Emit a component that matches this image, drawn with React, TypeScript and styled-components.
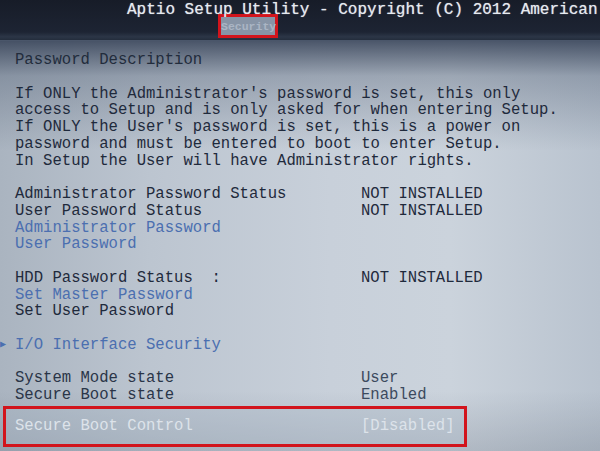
import styled, { createGlobalStyle } from 'styled-components';

const GlobalStyle = createGlobalStyle`
  html, body {
    margin: 0;
    padding: 0;
    background: #1b2130;
  }
`;

const Screen = styled.div`
  width: 600px;
  height: 451px;
  overflow: hidden;
  display: flex;
  flex-direction: column;
  font-family: 'Liberation Mono', 'DejaVu Sans Mono', monospace;
  font-size: 15.6px;
  white-space: pre;
`;

const TopBar = styled.div`
  height: 41px;
  flex-shrink: 0;
  padding-top: 2px;
  box-sizing: border-box;
  background: linear-gradient(180deg, #171c28 0%, #1d2433 80%, #2c3647 92%, #242d3c 100%);
  border-bottom: 1px solid #4a566a;
`;

const Title = styled.div`
  height: 12px;
  line-height: 17px;
  padding-left: 127px;
  font-size: 16px;
  color: #e6eaf0;
  text-shadow: 0 0 1px rgba(230, 234, 240, 0.7);
`;

const Tab = styled.div`
  margin-left: 218px;
  width: 60px;
  height: 24px;
  box-sizing: border-box;
  border: 3px solid #d2141c;
  background: #8794a6;
  color: #aab5c4;
  font-size: 11.5px;
  line-height: 19px;
  text-align: center;
  font-weight: bold;
`;

const Body = styled.div`
  flex: 1;
  padding-top: 11px;
  background:
    linear-gradient(180deg, rgba(44, 56, 78, 0.8) 0px, rgba(70, 84, 106, 0.35) 35px, rgba(0, 0, 0, 0) 110px),
    linear-gradient(0deg, rgba(60, 70, 86, 0.18) 0px, rgba(0, 0, 0, 0) 60px),
    linear-gradient(90deg, #aab4c0 0%, #bcc5d0 25%, #c8d0da 55%, #cbd3dc 75%, #b9c3cf 100%);
  color: #1f2a3c;
`;

const Line = styled.div<{ $tone?: 'link' | 'muted' }>`
  position: relative;
  height: 16.75px;
  line-height: 16.75px;
  padding-left: 15px;
  display: grid;
  grid-template-columns: 346px 1fr;
  color: ${(p) => (p.$tone === 'link' ? '#4b6fb0' : p.$tone === 'muted' ? '#2a3548' : '#1f2a3c')};
`;

const Heading = styled(Line)`
  color: #222c3c;
`;

const Pointer = styled.span`
  position: absolute;
  left: 0;
  top: 0;
  font-size: 10px;
  color: #4b6fb0;
`;

const Value = styled.span<{ $soft?: boolean }>`
  color: ${(p) => (p.$soft ? '#3c4a5e' : '#1f2a3c')};
`;

const Highlight = styled.div`
  margin: 2px 0 0 3px;
  width: 464px;
  height: 41px;
  box-sizing: border-box;
  border: 3px solid #d2141c;
  padding-left: 9px;
  display: grid;
  grid-template-columns: 346px 1fr;
  align-items: center;
  color: #dde3ea;
  background: rgba(176, 188, 202, 0.35);
`;

const descLines = [
  "If ONLY the Administrator's password is set, this only",
  'access to Setup and is only asked for when entering Setup.',
  "If ONLY the User's password is set, this is a power on",
  'password and must be entered to boot to enter Setup.',
  'In Setup the User will have Administrator rights.',
];

export default function App() {
  return (
    <Screen>
      <GlobalStyle />
      <TopBar>
        <Title>Aptio Setup Utility - Copyright (C) 2012 American</Title>
        <Tab>Security</Tab>
      </TopBar>
      <Body>
        <Heading>Password Description</Heading>
        <Line />
        {descLines.map((t) => (
          <Line key={t}>{t}</Line>
        ))}
        <Line />
        <Line>
          <span>Administrator Password Status</span>
          <Value>NOT INSTALLED</Value>
        </Line>
        <Line>
          <span>User Password Status</span>
          <Value>NOT INSTALLED</Value>
        </Line>
        <Line $tone="link">Administrator Password</Line>
        <Line $tone="link">User Password</Line>
        <Line />
        <Line>
          <span>HDD Password Status  :</span>
          <Value>NOT INSTALLED</Value>
        </Line>
        <Line $tone="link">Set Master Password</Line>
        <Line>Set User Password</Line>
        <Line />
        <Line $tone="link">
          <Pointer>▶</Pointer>
          <span>I/O Interface Security</span>
        </Line>
        <Line />
        <Line $tone="muted">
          <span>System Mode state</span>
          <Value $soft>User</Value>
        </Line>
        <Line $tone="muted">
          <span>Secure Boot state</span>
          <Value $soft>Enabled</Value>
        </Line>
        <Highlight>
          <span>Secure Boot Control</span>
          <span>[Disabled]</span>
        </Highlight>
      </Body>
    </Screen>
  );
}
